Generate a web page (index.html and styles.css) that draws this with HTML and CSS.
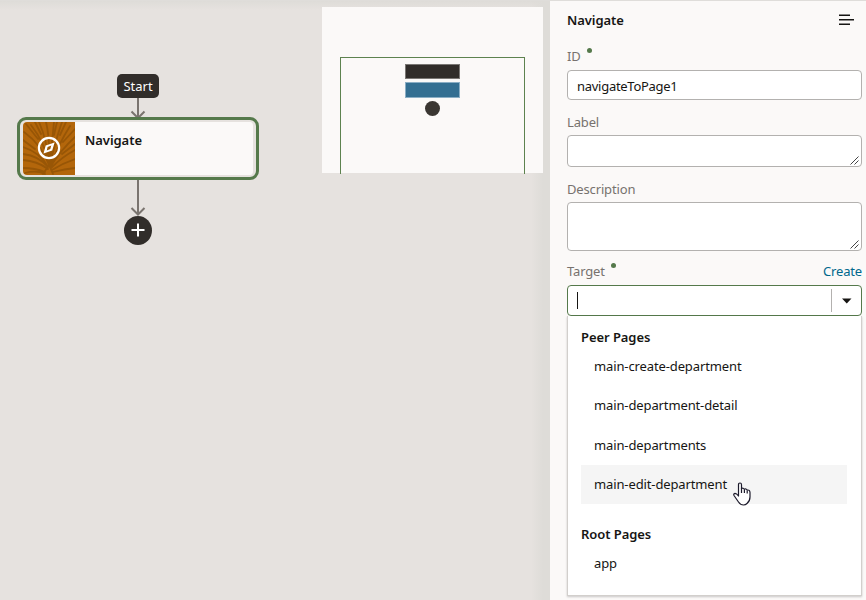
FILE: index.html
```html
<!DOCTYPE html>
<html lang="en">
<head>
<meta charset="utf-8">
<title>Action chain editor</title>
<link rel="stylesheet" href="styles.css">
</head>
<body>
<div class="editor">
  <main class="canvas">
    <svg class="connectors" width="260" height="260" fill="none" stroke="#7a746f" stroke-width="2">
      <path d="M138 97V117M131.500 111.500L138 118L144.500 111.500M138 180V215M131.500 208L138 214.500L144.500 208"/>
    </svg>
    <div class="start">Start</div>
    <div class="node">
      <div class="node-icon">
        <svg width="52" height="53" viewBox="0 0 52 53" fill="none">
          <g stroke="#985606" stroke-width="1.800" stroke-linecap="round">
            <path d="M25 45Q17 30 0 25M25 45Q16 34 0 32M25 47Q14 39 0 38M26 43Q19 23 1 10M26 42Q22 21 8 3M26 42Q24 18 16 0M26 42Q27 16 23 0M27 42Q29 20 31 0M27 43Q32 20 39 0M28 43Q35 23 47 4M28 44Q37 29 52 15M28 46Q39 35 52 28M29 48Q40 41 52 37M30 50Q42 47 52 46M22 50Q12 46 0 46M0 18L12 27M3 2L15 17M12 0L18 12M34 0L31 13M43 0L37 13M52 7L40 20M52 22L39 32M2 51Q13 48 22 52M30 52L26 43L20 52"/>
          </g>
          <circle cx="26" cy="26" r="10.100" stroke="#fff" stroke-width="2.200"/>
          <path fill="#fff" fill-rule="evenodd" d="M31.600 20.400L29.200 28.500L20.500 31.600L22.700 23.500ZM28.300 23.600L24.600 25L23.800 28.400L27.300 27Z"/>
        </svg>
      </div>
      <div class="node-title">Navigate</div>
    </div>
    <div class="add"><svg width="28" height="28" stroke="#fff" stroke-width="2"><path d="M14 7.500V20.500M7.500 14H20.500"/></svg></div>
    <div class="minimap">
      <div class="viewport">
        <div class="mini mini-start"></div>
        <div class="mini mini-action"></div>
        <div class="mini-add"></div>
      </div>
    </div>
  </main>
  <div class="splitter"></div>
  <aside class="panel">
    <header class="panel-head">
      <h2>Navigate</h2>
      <svg width="16" height="12" fill="#161513"><path d="M0 .5H11V2H0ZM0 5H15V6.500H0ZM0 9.500H11V11H0Z"/></svg>
    </header>
    <div class="label label-id"><span>ID<i class="required"></i></span></div>
    <div class="field">navigateToPage1</div>
    <div class="label">Label</div>
    <div class="field area"><svg class="grip" width="9" height="9" stroke="#444"><path d="M.5 8.500L8.500 .5M4.500 8.500L8.500 4.500"/></svg></div>
    <div class="label">Description</div>
    <div class="field area tall"><svg class="grip" width="9" height="9" stroke="#444"><path d="M.5 8.500L8.500 .5M4.500 8.500L8.500 4.500"/></svg></div>
    <div class="label label-target"><span>Target<i class="required"></i></span><a class="create">Create</a></div>
    <div class="combo">
      <div class="caret"></div>
      <div class="toggle"><svg width="10" height="6" fill="#161513"><path d="M0 .5H9.500L4.750 5.500Z"/></svg></div>
    </div>
    <div class="menu">
      <h3>Peer Pages</h3>
      <ul>
        <li>main-create-department</li>
        <li>main-department-detail</li>
        <li>main-departments</li>
        <li class="hover">main-edit-department</li>
      </ul>
      <h3>Root Pages</h3>
      <ul><li>app</li></ul>
    </div>
  </aside>
  <svg class="pointer" width="18" height="24" viewBox="0 0 18 24" fill="#fff" stroke="#1c1a2b" stroke-width="1.200" stroke-linejoin="round">
    <path d="M5.500 14V2.700Q5.500 1 7 1T8.500 2.700V6.600Q10.300 5.500 11.300 7.300Q13.200 6.300 14.100 8.100Q16.800 7.500 17 10.500V15Q17 19 14 21.500Q12.500 23 10.500 23Q7.500 23 5.500 20L1 13.500Q.2 11.700 2 11.300Q3.400 11.200 5.500 14Z"/>
    <path fill="none" d="M8.500 6V11M11.400 7.500V11M14.200 8.500V11.500"/>
  </svg>
</div>
</body>
</html>
```
FILE: styles.css
```css
* { box-sizing: border-box; }
body {
  margin: 0;
  font: 13px/18px "Noto Sans", sans-serif;
  color: #161513;
}
.editor {
  position: relative;
  display: flex;
  width: 866px;
  height: 600px;
  overflow: hidden;
  border-top: 1px solid #dfddda;
  background: #e6e2df;
}
.canvas {
  position: relative;
  flex: 1;
  background:
    linear-gradient(to bottom, #dedcd8, transparent 9px),
    linear-gradient(to left, #dedcd8, transparent 12px);
}
.connectors { position: absolute; left: 0; top: -1px; }
.start {
  position: absolute;
  left: 117px;
  top: 73px;
  width: 42px;
  height: 24px;
  border-radius: 5px;
  background: #312d2a;
  color: #fff;
  line-height: 24px;
  text-align: center;
}
.node {
  position: absolute;
  left: 17px;
  top: 116px;
  width: 242px;
  height: 63px;
  padding: 2px 3px 2px 3px;
  display: flex;
  border: 3px solid #55794b;
  border-radius: 9px;
  background: #fbf9f8 content-box;
}
.node-icon { width: 52px; background: #b3660b; border-radius: 4px 0 0 4px; overflow: hidden; }
.node-icon svg { display: block; }
.node-title { padding: 9px 10px; font-weight: 600; letter-spacing: -.05px; }
.add {
  position: absolute;
  left: 124px;
  top: 215px;
  width: 28px;
  height: 29px;
  border-radius: 50%;
  background: #312d2a;
}
.add svg { display: block; }
.minimap {
  position: absolute;
  left: 322px;
  top: 6px;
  width: 221px;
  height: 166px;
  padding: 50px 18px 0;
  background: #fbf9f8;
}
.viewport {
  display: flex;
  flex-direction: column;
  align-items: center;
  height: 117px;
  padding-top: 6px;
  border: 1px solid #5d824f;
  border-bottom: 0;
}
.mini { width: 55px; height: 15px; border: 1px solid #7a7774; background: #312d2a; }
.mini-action { height: 16px; margin: 3px 0; border-color: #8baec5; background: #346f92; }
.mini-add { width: 15px; height: 15px; border-radius: 50%; background: #3a3632; }
.splitter { width: 7px; background: #dedcd8; }
.panel {
  width: 316px;
  padding: 0 4px 0 17px;
  background: #fbf9f8;
}
.panel-head {
  display: flex;
  align-items: center;
  justify-content: space-between;
  height: 37px;
  padding-right: 7px;
}
h2, h3 { margin: 0; font-size: 13px; line-height: 18px; font-weight: 600; letter-spacing: -.07px; }
.label {
  display: flex;
  justify-content: space-between;
  height: 35px;
  padding-top: 13px;
  color: #77726e;
  letter-spacing: -.15px;
}
.label-id { height: 32px; padding-top: 9px; }
.label-target { height: 34px; padding-top: 11px; }
.required {
  display: inline-block;
  width: 5px;
  height: 5px;
  margin-left: 6px;
  border-radius: 50%;
  background: #55794b;
  vertical-align: 8px;
}
.create { color: #00688c; }
.field {
  height: 30px;
  padding: 0 9px;
  border: 1px solid #b3b1af;
  border-radius: 4px;
  background: #fff;
  line-height: 31px;
  letter-spacing: -.28px;
}
.area { display: flex; align-items: flex-end; justify-content: flex-end; height: 32px; padding: 1px 2px; }
.tall { height: 49px; }
.combo {
  display: flex;
  align-items: center;
  height: 31px;
  padding-left: 9px;
  border: 1px solid #55794b;
  border-radius: 4px;
  background: #fff;
}
.caret { width: 1px; height: 17px; background: #161513; }
.toggle {
  display: grid;
  place-items: center;
  width: 30px;
  height: 23px;
  margin-left: auto;
  border-left: 1px solid #b3b1af;
}
.menu {
  height: 280px;
  padding: 12px 14px 12px 13px;
  border: 1px solid #d2cfcc;
  border-top: 0;
  background: #fff;
  box-shadow: 0 1px 2px #0003;
}
ul { margin: 1px 0 21px; padding: 0; list-style: none; }
li { height: 39.330px; padding-left: 13px; line-height: 39px; letter-spacing: -.12px; }
.hover { background: #f5f5f5; }
.pointer { position: absolute; left: 733px; top: 481px; }
```
